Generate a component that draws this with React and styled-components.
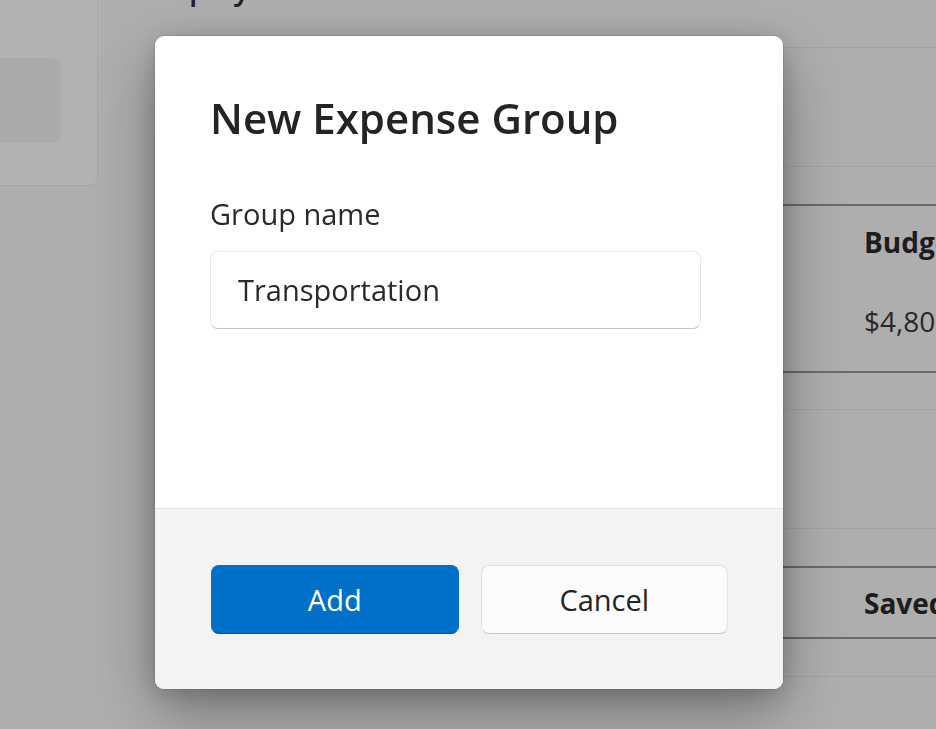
import React from "react";
import styled, { createGlobalStyle } from "styled-components";

const GlobalStyle = createGlobalStyle`
  html, body {
    margin: 0;
    height: 100%;
    overflow: hidden;
  }
  body {
    background: #fafafa;
    font-family: "Open Sans", "Noto Sans", sans-serif;
    color: #242424;
  }
`;

const Page = styled.div`
  display: flex;
  gap: 60px;
  height: 100vh;
  overflow: hidden;
`;

const SideCard = styled.div`
  flex: none;
  width: 138px;
  height: 226px;
  margin: -40px 0 0 -40px;
  padding: 97px 36px 0 0;
  box-sizing: border-box;
  background: #ffffff;
  border: 1px solid #ececec;
  border-radius: 8px;
`;

const SideTile = styled.div`
  height: 85px;
  border-radius: 8px;
  background: #f4f4f4;
`;

const Panel = styled.div`
  flex: 1;
  display: flex;
  flex-direction: column;
  & > * {
    flex: none;
  }
`;

const PanelHeading = styled.h1`
  margin: -30px 0 0 -14px;
  font-size: 30px;
  font-weight: 600;
  line-height: 38px;
  color: #333;
`;

const Block = styled.div`
  height: 118px;
  margin-top: ${(p) => p.$gap || 0}px;
  border-top: 1px solid #ebebeb;
  border-bottom: 1px solid #ebebeb;
`;

const Table = styled.div`
  margin-top: 37px;
  border-top: 2px solid #999;
  border-bottom: 2px solid #999;
`;

const TableRow = styled.div`
  display: grid;
  grid-template-columns: 356px 350px 1fr;
  align-items: center;
  box-sizing: border-box;
  height: ${(p) => p.$h}px;
  padding-bottom: ${(p) => p.$pb || 0}px;
  font-size: 28px;
  font-weight: ${(p) => (p.$head ? 700 : 400)};
  color: ${(p) => (p.$head ? "#2a2a2a" : "#3a3a3a")};
`;

const Overlay = styled.div`
  position: fixed;
  inset: 0;
  display: flex;
  align-items: center;
  justify-content: center;
  background: rgba(0, 0, 0, 0.3);
`;

const Dialog = styled.div`
  width: 628px;
  height: 653px;
  margin: -4px 0 0 2px;
  display: flex;
  flex-direction: column;
  background: #ffffff;
  border-radius: 9px;
  overflow: hidden;
  box-shadow: 0 0 0 1px rgba(0, 0, 0, 0.08), 0 24px 64px rgba(0, 0, 0, 0.34),
    0 4px 24px rgba(0, 0, 0, 0.18);
`;

const Body = styled.div`
  flex: 1;
  display: flex;
  flex-direction: column;
  align-items: flex-start;
  padding: 54px 55px 0;
`;

const Title = styled.h2`
  margin: 0;
  font-size: 42px;
  font-weight: 600;
  line-height: 56px;
  color: #242424;
`;

const Label = styled.label`
  margin-top: 48px;
  font-size: 29px;
  line-height: 40px;
  color: #2a2a2a;
`;

const Input = styled.input`
  margin-top: 17px;
  width: 491px;
  height: 78px;
  box-sizing: border-box;
  padding: 0 27px 2px;
  border: 1px solid #e8e8e8;
  border-bottom-color: #c4c4c4;
  border-radius: 8px;
  background: #ffffff;
  font-family: inherit;
  font-size: 29px;
  color: #2a2a2a;
  outline: none;
`;

const Footer = styled.div`
  flex: none;
  height: 181px;
  box-sizing: border-box;
  display: grid;
  grid-template-columns: 1fr 1fr;
  gap: 22px;
  align-items: center;
  padding: 0 55px 0 56px;
  background: #f3f3f3;
  border-top: 1px solid #e4e4e4;
`;

const Button = styled.button`
  height: 69px;
  border-radius: 8px;
  font-family: inherit;
  font-size: 29px;
  cursor: pointer;
  background: ${(p) => (p.$primary ? "#0070c9" : "#fbfbfb")};
  color: ${(p) => (p.$primary ? "#ffffff" : "#242424")};
  border: 1px solid ${(p) => (p.$primary ? "#0070c9" : "#e2e2e2")};
  border-bottom-color: ${(p) => (p.$primary ? "#00529a" : "#c8c8c8")};
`;

export default function App() {
  return (
    <>
      <GlobalStyle />
      <Page>
        <SideCard>
          <SideTile />
        </SideCard>
        <Panel>
          <PanelHeading>Display</PanelHeading>
          <Block $gap={47 - 8} />
          <Table>
            <TableRow $head $h={72}>
              <span>Group</span>
              <span>Spent</span>
              <span>Budget</span>
            </TableRow>
            <TableRow $h={93} $pb={8}>
              <span>Housing</span>
              <span>$3,950.00</span>
              <span>$4,800.00</span>
            </TableRow>
          </Table>
          <Block $gap={36} />
          <Table>
            <TableRow $head $h={69}>
              <span>Goal</span>
              <span>Target</span>
              <span>Saved</span>
            </TableRow>
          </Table>
          <Block $gap={37} />
        </Panel>
      </Page>
      <Overlay>
        <Dialog>
          <Body>
            <Title>New Expense Group</Title>
            <Label htmlFor="group-name">Group name</Label>
            <Input id="group-name" defaultValue="Transportation" />
          </Body>
          <Footer>
            <Button $primary>Add</Button>
            <Button>Cancel</Button>
          </Footer>
        </Dialog>
      </Overlay>
    </>
  );
}
